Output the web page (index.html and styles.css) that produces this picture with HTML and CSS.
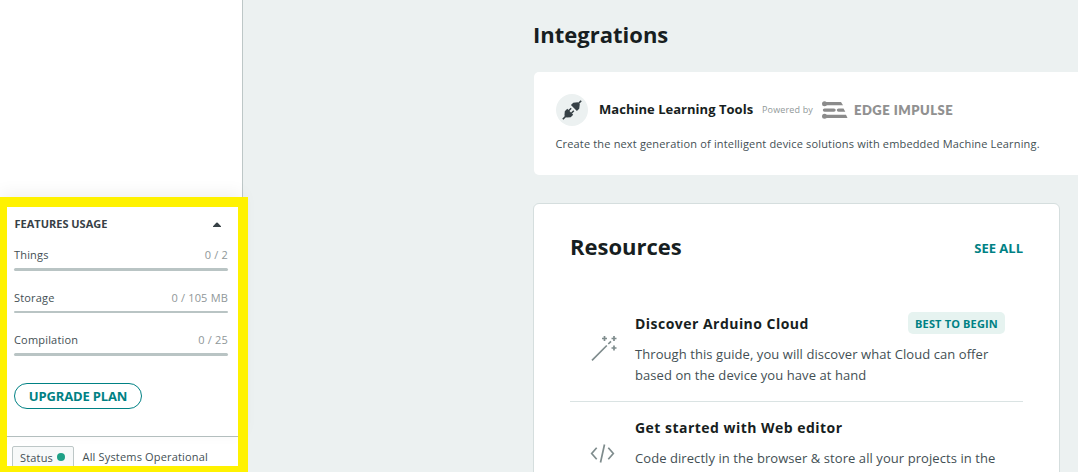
FILE: index.html
```html
<!DOCTYPE html>
<html lang="en">
<head>
<meta charset="utf-8">
<title>Arduino Cloud</title>
<link rel="stylesheet" href="styles.css">
</head>
<body>
<div class="page">
  <aside class="sidebar">
    <section class="usage">
      <header class="usage-head"><h2>FEATURES USAGE</h2>
        <svg class="caret" width="8" height="5" viewBox="0 0 8 5"><path d="M0 4.2 3.3.8Q4 .1 4.700.8L8 4.200V5H0z" fill="#374146"/></svg>
      </header>
      <div class="meter"><div class="meter-row"><span>Things</span><span class="amount">0 / 2</span></div><div class="track"></div></div>
      <div class="meter"><div class="meter-row"><span>Storage</span><span class="amount">0 / 105 MB</span></div><div class="track thin"></div></div>
      <div class="meter"><div class="meter-row"><span>Compilation</span><span class="amount">0 / 25</span></div><div class="track"></div></div>
      <button class="upgrade">UPGRADE PLAN</button>
    </section>
    <footer class="status"><div class="status-tag">Status<i class="dot"></i></div><span class="status-text">All Systems Operational</span></footer>
  </aside>
  <main class="content">
    <h1 class="title">Integrations</h1>
    <section class="integration">
      <div class="integration-head">
        <span class="plug"><svg width="32" height="32" viewBox="0 0 32 32"><g transform="translate(16 16) rotate(45)" fill="#374146"><path d="M-.8-13H.8v4H-.8zM-1.500-9.500h3L4.200-6v3.300h-8.400V-6z"/><path d="M-4.200 2.500h8.400v3.500L1.500 9.200H-1.500L-4.200 6zM-2.600-.7h1.500V2.500h-1.500zM1.100-.7h1.500V2.500H1.100zM-.8 9H.8v4H-.8z"/></g></svg></span>
        <h2>Machine Learning Tools</h2>
        <span class="powered">Powered by</span>
        <svg class="edge-mark" width="26" height="18" viewBox="0 0 26 18"><g fill="#8b8b8b"><circle cx="2.500" cy="2.700" r="2.500"/><circle cx="2.500" cy="15.300" r="2.500"/><path d="M2.500.9H19l2 3.400H2.500zM2.500 7.400h9.500a1.700 1.700 0 0 1 0 3.400H2.500a1.700 1.700 0 0 1 0-3.400zM16.500 7.400h5l1.800 3.400h-6.800a1.700 1.700 0 0 1 0-3.400zM2.500 13.700H24l1.500 3.400h-23z"/></g></svg>
        <span class="edge-name">EDGE IMPULSE</span>
      </div>
      <p>Create the next generation of intelligent device solutions with embedded Machine Learning.</p>
    </section>
    <section class="resources">
      <header class="resources-head"><h2>Resources</h2><a class="see-all">SEE ALL</a></header>
      <article class="resource">
        <svg class="resource-icon" width="28" height="28" viewBox="0 0 28 28" fill="none" stroke="#7f8c8d" stroke-width="1.700"><path d="M2 26.300 16.800 11.500M18.300 10 21 7.300M12 4.500h5M14.500 2v5M21.500 4.500h5M24 2v5M21.500 14h5M24 11.500v5"/></svg>
        <div class="resource-body"><div class="resource-title"><h3>Discover Arduino Cloud</h3><span class="badge">BEST TO BEGIN</span></div>
        <p>Through this guide, you will discover what Cloud can offer<br>based on the device you have at hand</p></div>
      </article>
      <article class="resource">
        <svg class="resource-icon" width="28" height="28" viewBox="0 0 28 28" fill="none" stroke="#7f8c8d" stroke-width="1.700"><path d="M6.700 8.800 1.700 14.500 6.700 20.200M18.300 8.800l5 5.700-5 5.700M14.500 5.500l-4 18"/></svg>
        <div class="resource-body"><div class="resource-title"><h3>Get started with Web editor</h3></div>
        <p>Code directly in the browser &amp; store all your projects in the</p></div>
      </article>
    </section>
  </main>
  <div class="highlight"></div>
</div>
</body>
</html>
```
FILE: styles.css
```css
* { box-sizing: border-box; }
body, h1, h2, h3, p { margin: 0; }
body { font-family: "Open Sans", sans-serif; color: #374146; overflow: hidden; }
.page { position: relative; display: flex; width: 1078px; height: 472px; overflow: hidden; background: #ecf1f1; }
.sidebar { flex: none; display: flex; flex-direction: column; justify-content: flex-end; width: 243px; background: #fff; border-right: 1px solid #bdc7c7; }
.usage { height: 239px; padding: 17px 14px 0; box-shadow: 0 -4px 16px rgba(0,0,0,.06); }
.usage-head { display: flex; align-items: center; justify-content: space-between; height: 20px; padding: 0 7.500px 0 .5px; margin-bottom: 11px; }
.usage-head h2 { font-size: 11px; line-height: 20px; }
.meter { height: 42.500px; }
.meter-row { display: flex; justify-content: space-between; height: 23px; font-size: 11px; line-height: 20px; letter-spacing: .18px; color: #434f54; }
.amount { color: #8f9799; }
.track { height: 3px; border-radius: 2px; background: #b9c4c4; }
.thin { height: 2px; }
.upgrade { display: block; width: 128px; height: 26px; margin-top: 10px; padding: 0; border: 1px solid #008184; border-radius: 13px; background: #fff; color: #008184; font: 700 13px/24px "Open Sans", sans-serif; letter-spacing: -.15px; }
.status { display: flex; height: 36px; padding: 9px 0 0 12px; border-top: 1px solid #b3bebe; font-size: 11px; line-height: 22px; letter-spacing: .17px; color: #434f54; }
.status-tag { display: flex; align-items: center; width: 62px; height: 24px; padding-left: 7px; border: 1px solid #bdc7c7; border-radius: 2px; background: #f7f9f9; }
.dot { width: 8px; height: 8px; margin: -2px 0 0 4px; border-radius: 50%; background: #1da086; }
.status-text { margin-left: 8.500px; }
.highlight { position: absolute; left: 0; top: 197px; width: 248px; height: 275px; border: solid #fff200; border-width: 10px 10px 6px 7px; }
.content { flex: none; width: 900px; padding: 19px 0 0 291px; color: #171e21; }
.title { margin: 0 0 23px -1px; font-size: 22px; line-height: 30px; }
.integration { height: 103px; padding: 22px; border-radius: 5px 0 0 5px; background: #fff; }
.integration-head { display: flex; align-items: center; height: 32px; }
.plug { width: 32px; height: 32px; border-radius: 50%; background: #ecf1f1; }
.integration h2 { width: 154px; font-size: 13px; line-height: 20px; letter-spacing: .03px; margin: -2px 0 0 11px; white-space: nowrap; }
.powered { margin: -2px 0 0 9px; color: #919999; font-size: 9px; letter-spacing: .15px; white-space: nowrap; }
.edge-mark { margin-left: 9px; }
.edge-name { margin-left: 6px; font: 800 13px/20px Lato, sans-serif; letter-spacing: .5px; color: #919191; white-space: nowrap; }
.integration p { margin: 8px 0 0 -.5px; font-size: 11px; line-height: 20px; letter-spacing: .16px; color: #434f54; }
.resources { width: 527px; height: 330px; margin: 28px 0 0 -1px; padding: 0 36px; border: 1px solid #d5dede; border-radius: 6px; background: #fff; }
.resources-head { display: flex; align-items: center; justify-content: space-between; height: 88px; }
.resources-head h2 { margin-top: -4px; font-size: 22px; }
.see-all { color: #008184; font-size: 13px; font-weight: 700; }
.resource { display: flex; height: 104px; border-bottom: 1px solid #dae3e3; }
.resource:nth-of-type(1) { height: 110px; padding-top: 16px; }
.resource:nth-of-type(2) { padding-top: 10px; }
.resource:nth-of-type(2) .resource-icon { margin-top: 27px; }
.resource-icon { flex: none; margin: 26px 17px 0 20px; overflow: visible; }
.resource-body { flex: 1; }
.resource-title { display: flex; justify-content: space-between; align-items: center; height: 30px; padding-right: 18px; }
.resource h3 { font-size: 14px; letter-spacing: .47px; }
.badge { display: flex; align-items: center; justify-content: center; width: 97px; height: 22px; border-radius: 5px; background: #e6f3f0; color: #008184; font-size: 11px; font-weight: 700; letter-spacing: .15px; }
.resource p { font-size: 13px; line-height: 21px; letter-spacing: .07px; white-space: nowrap; color: #434f54; margin-top: 6px; }
```
